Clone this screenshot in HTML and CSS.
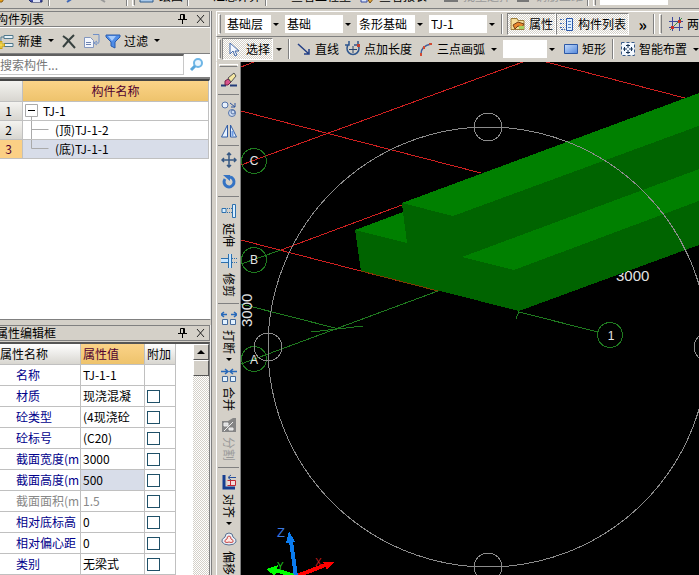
FILE: index.html
```html
<!DOCTYPE html>
<html lang="zh-CN">
<head>
<meta charset="utf-8">
<title>TJ-1</title>
<link rel="stylesheet" href="styles.css">
</head>
<body>
<header class="mainbar">
  <div class="mainbar-row">
    <svg class="ico" viewBox="0 0 16 16"><path d="M0 3h10l5 3-5 8H0z" fill="#e9a21b" stroke="#8a5a10"/></svg>
    <svg class="ico save" viewBox="0 0 16 16"><path d="M1 1h13v13H3L1 12z" fill="#4650a8" stroke="#1f2a6b"/><path d="M5 9h7v5H5z" fill="#dfe3f5"/></svg>
    <i class="sep"></i>
    <svg class="ico undo" viewBox="0 0 16 16"><path d="M3 5h6q5 1 2 5l-6 4" fill="none" stroke="#4169b8" stroke-width="2"/></svg>
    <svg class="ico redo" viewBox="0 0 16 16"><path d="M12 4H6Q2 7 5 10l6 4" fill="none" stroke="#999" stroke-width="2"/></svg>
    <i class="sep"></i><i class="grip"></i>
    <svg class="ico" viewBox="0 0 16 16"><path d="M1 2h13v12H1z" fill="#a9c9ea" stroke="#2d5b8c"/></svg>
    <button class="tool">绘图</button><i class="sep"></i>
    <button class="tool sum">汇总计算</button><i class="sep"></i>
    <button class="tool quantity">查看工程量</button>
    <svg class="ico formula" viewBox="0 0 16 16"><path d="M2 6h6v8H2z" fill="#dce6fa" stroke="#3048a0"/><path d="M11 6l4 4-4 5-3-5z" fill="#e5aa40" stroke="#7b5010"/></svg>
    <button class="tool">查看报表</button>
    <svg class="ico batch" viewBox="0 0 16 16"><path d="M1 2h14v12H1z" fill="#777"/><path d="M5 8h5v3H5z" fill="#fff"/></svg>
    <button class="tool" disabled>批量选择</button>
    <svg class="ico" viewBox="0 0 16 16"><path d="M2 2h12v12H2z" fill="#777"/></svg>
    <button class="tool" disabled>钢筋三维</button>
    <i class="sep"></i><i class="grip"></i>
    <span class="combo w78"><select aria-label="视图"><option></option></select></span>
  </div>
</header>
<main class="work">
  <aside class="side">
    <section class="dock list">
      <h2 class="dock-title"><span>构件列表</span>
        <button class="mini" aria-label="固定"><svg viewBox="0 0 9 10"><path d="M2.500.5h4v5h-4zM0 5.500h9M4.500 6v4M5.500 1v4" fill="none" stroke="#000"/></svg></button>
        <button class="mini" aria-label="关闭"><svg viewBox="0 0 9 10"><path d="M1 1l7 8M8 1L1 9" stroke="#222" fill="none"/></svg></button>
      </h2>
      <div class="dock-tools">
        <button class="tool"><svg class="ico" viewBox="0 0 16 16"><path d="M5 2.500h9v3H5zM5 10.500h9v3H5zM2 4h3M2 4v8h3" fill="#e8f2f8" stroke="#50788c"/><path d="M2 8v8M-2 12h8" stroke="#c9a010" stroke-width="3"/><path d="M2 9v6M-1 12h6" stroke="#ffe864"/></svg>新建<i class="caret"></i></button>
        <button class="tool" aria-label="删除"><svg class="ico" viewBox="0 0 16 16"><path d="M2 3l4 3 8 9M13 2L8 7l-6 7" stroke="#37413f" stroke-width="2" fill="none"/></svg></button>
        <button class="tool copy" aria-label="复制"><svg class="ico" viewBox="0 0 16 16"><path d="M.5 4.500h6l3 3v7h-9z" fill="#f3f6fd" stroke="#8296be"/><path d="M2 9.500h5M2 11.500h5" stroke="#6d83b0"/><path d="M9 1.500h6v8M12 10h3M13 8l-3 2 3 2" fill="none" stroke="#6f8fc9"/></svg></button>
        <button class="tool filter"><svg class="ico" viewBox="0 0 16 16"><path d="M1 2h14v2l-5 5v6l-4-2V9L1 4z" fill="#4f8de8" stroke="#2a5cad"/><path d="M3 3h8L7 8z" fill="#a7cbfa"/></svg>过滤<i class="caret"></i></button>
      </div>
      <div class="search">
        <input type="text" aria-label="搜索构件" placeholder="搜索构件...">
        <button class="find" aria-label="搜索"><svg class="ico" viewBox="0 0 16 16"><circle cx="9" cy="6" r="4" fill="#eaf6ff" stroke="#6fb6e6" stroke-width="2"/><path d="M6 9l-4 4" stroke="#58a6dc" stroke-width="3"/></svg></button>
      </div>
      <table class="tree">
        <thead><tr><th class="num"></th><th>构件名称</th></tr></thead>
        <tbody>
          <tr><td class="num">1</td><td><svg class="twig" viewBox="0 0 18 18"><path d="M2.500 2.500h12v12h-12zM8.500 14.500v4" fill="none" stroke="#aaa"/><path d="M5 8.500h7" stroke="#000"/></svg>TJ-1</td></tr>
          <tr><td class="num">2</td><td><svg class="twig wide" viewBox="0 0 30 18"><path d="M8.500 0v18M8.500 8.500h17" fill="none" stroke="#aaa"/></svg>(顶)TJ-1-2</td></tr>
          <tr class="sel"><td class="num">3</td><td><svg class="twig wide" viewBox="0 0 30 18"><path d="M8.500 0v8.500h17" fill="none" stroke="#aaa"/></svg>(底)TJ-1-1</td></tr>
        </tbody>
      </table>
    </section>
    <section class="dock props">
      <h2 class="dock-title"><span>属性编辑框</span>
        <button class="mini" aria-label="固定"><svg viewBox="0 0 9 10"><path d="M2.500.5h4v5h-4zM0 5.500h9M4.500 6v4M5.500 1v4" fill="none" stroke="#000"/></svg></button>
        <button class="mini" aria-label="关闭"><svg viewBox="0 0 9 10"><path d="M1 1l7 8M8 1L1 9" stroke="#222" fill="none"/></svg></button>
      </h2>
      <div class="prop-body">
        <table class="prop">
          <thead><tr><th class="c1">属性名称</th><th class="c2">属性值</th><th class="c3">附加</th></tr></thead>
          <tbody>
            <tr><td>名称</td><td>TJ-1-1</td><td></td></tr>
            <tr><td>材质</td><td>现浇混凝</td><td><input type="checkbox" aria-label="材质"></td></tr>
            <tr><td>砼类型</td><td>(4现浇砼</td><td><input type="checkbox" aria-label="砼类型"></td></tr>
            <tr><td>砼标号</td><td>(C20)</td><td><input type="checkbox" aria-label="砼标号"></td></tr>
            <tr><td>截面宽度(m</td><td>3000</td><td><input type="checkbox" aria-label="截面宽度"></td></tr>
            <tr><td>截面高度(m</td><td class="cur">500</td><td><input type="checkbox" aria-label="截面高度"></td></tr>
            <tr class="ro"><td>截面面积(m</td><td>1.5</td><td><input type="checkbox" aria-label="截面面积"></td></tr>
            <tr><td>相对底标高</td><td>0</td><td><input type="checkbox" aria-label="相对底标高"></td></tr>
            <tr><td>相对偏心距</td><td>0</td><td><input type="checkbox" aria-label="相对偏心距"></td></tr>
            <tr><td>类别</td><td>无梁式</td><td><input type="checkbox" aria-label="类别"></td></tr>
          </tbody>
        </table>
        <div class="scroll"><button class="sbtn" aria-label="向上"><i class="caret up"></i></button><div class="thumb"></div></div>
      </div>
    </section>
  </aside>
  <section class="stage">
    <div class="bar">
      <i class="grip"></i>
      <span class="combo w56"><select aria-label="楼层"><option>基础层</option></select></span>
      <span class="combo w68"><select aria-label="构件大类"><option>基础</option></select></span>
      <span class="combo w68"><select aria-label="构件类型"><option>条形基础</option></select></span>
      <span class="combo w68"><select aria-label="构件"><option>TJ-1</option></select></span>
      <i class="sep"></i>
      <button class="tool on"><svg class="ico" viewBox="0 0 16 16"><path d="M1 2.500h6l1 2h6v9H1z" fill="#f6df9a" stroke="#9c7c3a"/><path d="M3 9l5-3 6 2-2 3-4-1-3 3z" fill="#e9862d" stroke="#754018"/><path d="M9 10h5v3H9z" fill="#a8d060"/></svg>属性</button>
      <button class="tool on"><svg class="ico" viewBox="0 0 16 16"><path d="M7.500 2.500h6v12h-6z" fill="#dff0ff" stroke="#2855a8"/><path d="M9 5.500h3M9 8.500h3M9 11.500h3" stroke="#5a82c0"/><path d="M1 3.500h4M1 7.500h4M1 11.500h4M2 13.500h4" stroke="#3f69b1" stroke-dasharray="2 1"/></svg>构件列表</button>
      <button class="more" aria-label="更多">»</button>
      <i class="sep"></i><i class="grip"></i>
      <button class="tool"><svg class="ico" viewBox="0 0 16 16"><path d="M1 5.500h14M1 11.500h14M4.500 1v14M11.500 1v14" stroke="#3d4a9c"/><path d="M2 14L14 2" stroke="#398c45"/><path d="M3 10h3v3H3zM10 4h3v3h-3z" fill="#c53028"/></svg>两</button>
    </div>
    <div class="bar draw">
      <i class="grip"></i>
      <button class="tool on pick"><svg class="ico" viewBox="0 0 16 16"><path d="M3 2v11l3-3 2 5 2-1-2-4h4z" fill="#f4f8ff" stroke="#456aa8"/></svg>选择</button><button class="drop" aria-label="选择方式"><i class="caret"></i></button>
      <i class="sep"></i>
      <button class="tool"><svg class="ico" viewBox="0 0 16 16"><path d="M2 3l11 10M13 8v5H8" stroke="#233f86" stroke-width="1.500" fill="none"/></svg>直线</button>
      <button class="tool"><svg class="ico" viewBox="0 0 16 16"><path d="M4 3a6 6 0 1 0 8 0M4 0v4H0M9 4h4V0" stroke="#2e568f" stroke-width="1.500" fill="none"/><path d="M8 5v7M4 8.500h8" stroke="#29456f"/><path d="M12 3h3v3h-3z" fill="#c34333"/></svg>点加长度</button>
      <button class="tool arc"><svg class="ico" viewBox="0 0 16 16"><path d="M3 13Q3 5 13 3" stroke="#3d5d9b" stroke-width="1.500" fill="none"/><path d="M2 12h2v3H2zM5 5h2v3H5zM11 2h3v2h-3z" fill="#d24a32"/></svg>三点画弧<i class="caret"></i></button>
      <span class="combo w54"><select aria-label="画弧半径"><option></option></select></span>
      <button class="tool"><svg class="ico" viewBox="0 0 16 16"><defs><linearGradient id="rg" x2="1" y2="1"><stop stop-color="#c6dcfb"/><stop offset="1" stop-color="#5287db"/></linearGradient></defs><path d="M1.500 3.500h13v9h-13z" fill="url(#rg)" stroke="#2c58a6"/></svg>矩形</button>
      <i class="sep"></i>
      <button class="tool"><svg class="ico" viewBox="0 0 16 16"><path d="M1.500 1.500h13v13h-13z" fill="#f2f8ff" stroke="#375a89" stroke-dasharray="3 2"/><path d="M8 3v4M8 9v4M3 8h4M9 8h4M6 4.500h4M6 11.500h4M4.500 6v4M11.500 6v4" stroke="#183456"/></svg>智能布置<i class="caret"></i></button>
    </div>
    <div class="lower">
      <nav class="vbar">
        <i class="hgrip"></i>
        <button class="vtool" aria-label="删除"><svg class="ico" viewBox="0 0 16 16"><path d="M0 13.500h5M9 13.500h7" stroke="#233c7b" stroke-width="2"/><path d="M4 9l3-2 3 3-3 3H4z" fill="#d7528b" stroke="#702044"/><path d="M7 6l6-5 2 3-5 6z" fill="#f4e6a0" stroke="#555"/></svg></button>
        <i class="hsep"></i>
        <button class="vtool" aria-label="复制"><svg class="ico" viewBox="0 0 16 16"><circle cx="4" cy="4" r="3" fill="#e8f0fb" stroke="#5573a7"/><circle cx="11" cy="12" r="3.500" fill="#cddcf2" stroke="#5573a7"/><circle cx="12" cy="11" r="2" fill="none" stroke="#5573a7"/><path d="M9 2l5 4M14 2v4h-4" stroke="#2e549c" fill="none"/></svg></button>
        <button class="vtool" aria-label="镜像"><svg class="ico" viewBox="0 0 16 16"><path d="M6.500 2v12H.5zM9.500 2v12h6z" fill="#e8f3ff" stroke="#315ca5"/><path d="M11.500 8v5" stroke="#6c9ae0" stroke-width="2"/></svg></button>
        <i class="hsep"></i>
        <button class="vtool" aria-label="移动"><svg class="ico" viewBox="0 0 16 16"><path d="M8 1v14M1 8h14M6 3l2-2 2 2M6 13l2 2 2-2M3 6L1 8l2 2M13 6l2 2-2 2" stroke="#365883" stroke-width="1.500" fill="none"/></svg></button>
        <button class="vtool" aria-label="旋转"><svg class="ico" viewBox="0 0 16 16"><path d="M4 5a5 5 0 1 0 5-2" stroke="#3473c4" stroke-width="3" fill="none"/><path d="M2 1h7v6z" fill="#3473c4"/></svg></button>
        <i class="hsep"></i>
        <button class="vtool"><svg class="ico" viewBox="0 0 16 16"><path d="M11.500 1.500h3v13h-3z" fill="#d9efff" stroke="#2d70ad"/><path d="M1 5.500h4v4H1z" fill="#d9efff" stroke="#2d70ad"/><path d="M6 5.500h5M6 9.500h5" stroke="#2d70ad" stroke-dasharray="1 1"/></svg><span>延伸</span></button>
        <button class="vtool"><svg class="ico" viewBox="0 0 16 16"><path d="M7.500 1v14M10.500 1v14M0 5.500h7M0 9.500h7" stroke="#2d70ad"/><path d="M8 1h2v14H8zM0 6h7v3H0z" fill="#c7e5ff"/><path d="M11 5.500h5M11 9.500h5" stroke="#2d70ad" stroke-dasharray="1 1"/></svg><span>修剪</span></button>
        <i class="hsep"></i>
        <button class="vtool"><svg class="ico" viewBox="0 0 16 16"><path d="M1.500 9.500h5v5h-5zM9.500 9.500h5v5h-5z" fill="#e2f2ff" stroke="#456a9a"/><path d="M0 4.500h6M3 2L0 4.500 3 7M10 4.500h6M13 2l3 2.500L13 7" stroke="#2668ba" stroke-width="1.500" fill="none"/></svg><span>打断</span><i class="caret side"></i></button>
        <button class="vtool"><svg class="ico" viewBox="0 0 16 16"><path d="M1.500 9.500h5v5h-5zM9.500 9.500h5v5h-5z" fill="#e2f2ff" stroke="#456a9a"/><path d="M0 4.500h6M4 2l3 2.500L4 7M10 4.500h6M12 2L9 4.500 12 7" stroke="#2668ba" stroke-width="1.500" fill="none"/></svg><span>合并</span></button>
        <button class="vtool" disabled><svg class="ico" viewBox="0 0 16 16"><path d="M1 4h6l5-3h3v14H1z" fill="#858585"/><path d="M3 6h4v3H3zM3 14l9-9M8 11h4v2H8z" fill="#ddd" stroke="#eee"/></svg><span>分割</span></button>
        <i class="hsep"></i>
        <button class="vtool"><svg class="ico" viewBox="0 0 16 16"><path d="M3 1v13h11" stroke="#173e91" stroke-width="3" fill="none"/><path d="M6.500 6.500h8v5h-8M9.500 6v5" fill="#f4dada" stroke="#c32a35"/><path d="M8 3.500h7M10 1L7 3.500 10 6" stroke="#274f9b" fill="none"/></svg><span>对齐</span><i class="caret side"></i></button>
        <button class="vtool"><svg class="ico" viewBox="0 0 16 16"><path d="M8 2q4 0 4 4 4 2 3 5-2 3-7 3-5 0-7-3-1-3 3-5 0-4 4-4z" fill="#e9eef7" stroke="#5b7090"/><path d="M8 5q2 0 2 3 3 1 2 3-2 1-4 0-2 1-4 0-1-2 2-3 0-3 2-3z" fill="#ffe8e4" stroke="#c84b48"/></svg><span>偏移</span></button>
      </nav>
      <div class="viewport">
        <svg class="scene" role="img" aria-label="三维视图">
          <g transform="translate(-241 -62)">
            <g class="axis-red"><path d="M241 67l13-5M241 165L523 62M241 111l240 62M546 62l139 36M402 205l-121 45M241 240l197 51"/></g>
            <g class="axis-green"><path d="M281 250l-40 14M438 291L241 364M241 304l94 24M311 332l52-6M519 311l-3 8M519 312l79 20"/><circle cx="254" cy="161" r="12.500"/><circle cx="254" cy="260" r="12.500"/><circle cx="254" cy="359" r="12.500"/><circle cx="610" cy="335" r="12.500"/></g>
            <g class="label"><text x="616" y="281">3000</text><text transform="translate(252 327) rotate(-90)">3000</text></g>
            <path d="M402 203L996-17v153L519 311 361 271l-6-41 48-18z" fill="#006400"/>
            <path d="M402 203L996-17V17L453 216zM355 230l48-18 4 31zM462 257L996 59v31L514 270z" fill="#008000"/>
            <path d="M361 271l77 20" stroke="#7b3b00"/>
            <g class="label small"><text x="254" y="165">C</text><text x="254" y="264">B</text><text x="254" y="364">A</text><text x="611" y="340">1</text></g>
            <g class="orbit"><circle cx="488" cy="347" r="220"/><circle cx="488" cy="127" r="14"/><circle cx="268" cy="347" r="14"/><circle cx="708" cy="347" r="14"/><circle cx="488" cy="567" r="14"/></g>
            <path d="M297 576l31-12" stroke="#f00" stroke-width="4"/><path d="M334 562l-11 0 4 8z" fill="#f00"/>
            <path d="M295 576l-20-6" stroke="#0f0" stroke-width="4"/><path d="M266 569l12-4-3 11z" fill="#0f0"/>
            <path d="M296 577l-5-36" stroke="#0a7cf0" stroke-width="4"/><path d="M289 531l6 11-9 1z" fill="#0a7cf0"/>
            <g class="triad"><text x="277" y="537" fill="#3a78e0">Z</text><text class="xs" x="315" y="566" fill="#c81e1e">X</text><text class="xs" x="277" y="570" fill="#20c020">Y</text></g>
          </g>
        </svg>
      </div>
    </div>
  </section>
</main>
</body>
</html>
```
FILE: styles.css
```css
* { box-sizing: border-box; }
html, body { height: 100%; }
body {
  margin: 0;
  display: flex;
  flex-direction: column;
  overflow: hidden;
  background: #d4d0c8;
  color: #000;
  font: 12px/16px "Noto Sans CJK SC", sans-serif;
}
button, select, input { font: inherit; color: inherit; margin: 0; }
button { border: 0; padding: 0; background: none; white-space: nowrap; }
.ico { width: 16px; height: 16px; flex: none; display: block; }

.mainbar {
  flex: none;
  height: 9px;
  overflow: hidden;
  display: flex;
  align-items: flex-end;
  border-bottom: 1px solid #808080;
}
.mainbar-row { display: flex; align-items: center; flex: none; gap: 4px; height: 22px; padding-bottom: 2px; margin-left: -8px; }
.mainbar .tool:disabled { color: #999; }
.save { margin-left: 16px; }
.undo { margin-left: 8px; }
.redo { margin-left: 12px; margin-right: 12px; }
.sum { margin-left: 20px; }
.quantity { margin-left: 20px; }
.formula { margin-left: 4px; }
.batch { margin-left: 12px; }

.work { flex: 1; display: flex; min-height: 0; gap: 4px; padding-top: 2px; }
.side { flex: none; width: 212px; display: flex; flex-direction: column; border-right: 1px solid #808080; }
.dock { border-right: 1px solid #eee; display: flex; flex-direction: column; }
.list { flex: none; height: 309px; border-bottom: 1px solid #808080; }
.props { flex: 1; min-height: 0; margin-top: 5px; }
.dock-title {
  flex: none;
  margin: 0;
  height: 16px;
  display: flex;
  align-items: center;
  gap: 9px;
  padding-right: 4px;
  font-size: 12px;
  font-weight: 400;
  border: 1px solid #808080;
  border-left: 0;
  overflow: hidden;
}
.dock-title span { flex: 1; margin-left: -4px; line-height: 14px; }
.mini { width: 9px; height: 10px; }
.mini svg { display: block; width: 9px; height: 10px; }

.dock-tools { flex: none; height: 26px; display: flex; align-items: center; gap: 8px; border-top: 1px solid #fff; }
.tool { display: flex; align-items: center; gap: 3px; height: 22px; flex: none; }
.filter { margin-left: -2px; }
.caret { width: 0; height: 0; border: 3px solid transparent; border-top-color: #000; border-bottom: 0; margin-left: 3px; }
.caret.up { border: 4px solid transparent; border-bottom-color: #000; border-top: 0; margin: 0; }
.caret.side { margin: 0; }
.dock-tools .ico { margin-left: -1px; }

.search { flex: none; height: 26px; display: flex; background: #fff; border-bottom: 2px solid #808080; border-top: 1px solid #808080; padding-bottom: 2px; }
.search input { flex: 1; min-width: 0; border: 1px solid #c8c8c8; border-top: 2px solid #606060; border-left: 0; padding: 0; background: #fff; outline: 0; }
.search input::placeholder { color: #777; opacity: 1; }
.find { width: 26px; display: flex; align-items: center; justify-content: center; }

table { border-collapse: separate; border-spacing: 0; table-layout: fixed; }
th { font-weight: 400; }
th, td { padding: 0; white-space: nowrap; overflow: hidden; border-right: 1px solid #c0c0c0; border-bottom: 1px solid #c0c0c0; }
.list { background: linear-gradient(#d4d0c8 68px, #fff 68px); }
.tree { width: 100%; border-top: 2px solid #444; border-right: 1px solid #fff; }
.tree th { height: 21px; background: linear-gradient(#fbd388, #eec36c); color: #500030; }
.tree td { height: 19px; line-height: 18px; }
.tree .num { width: 23px; text-align: center; background: linear-gradient(#f4f3f0, #d8d6d0); padding-right: 5px; }
.tree .sel td { background: #d8dde9; }
.tree .sel .num { background: #fbd085; color: #500030; }
.twig { width: 18px; height: 18px; vertical-align: top; margin-right: 2px; }
.twig.wide { width: 30px; }

.prop-body { flex: 1; min-height: 0; overflow: hidden; margin-top: 1px; display: flex; justify-content: space-between; background: #fff; border-top: 2px solid #555; border-right: 1px solid #808080; }
.prop { flex: none; align-self: flex-start; width: 176px; }
.prop th { height: 21px; text-align: left; background: linear-gradient(#fff, #d8d6d0); }
.prop td { height: 21px; line-height: 20px; }
.prop .c1 { width: 81px; }
.prop .c2 { width: 64px; padding-left: 2px; background: linear-gradient(#fbd388, #eec36c); color: #500030; }
.prop .c3 { width: 31px; padding-left: 2px; }
.prop td:first-child { padding-left: 16px; color: #00008b; }
.prop td:nth-child(2) { padding-left: 2px; }
.prop .ro td, .prop .ro td:first-child { color: #888; }
.prop .cur { background: #d8dde9; }
.prop input { appearance: none; display: block; width: 13px; height: 13px; margin-left: 2px; border: 1px solid #1f5068; background: #fff; }
.scroll { width: 16px; background: repeating-conic-gradient(#d4d0c8 0 25%, #fff 0 50%) 0 0 / 2px 2px; }
.sbtn, .thumb { display: flex; align-items: center; justify-content: center; width: 16px; height: 16px; background: #d4d0c8; border: 1px solid #fff; border-right-color: #555; border-bottom-color: #555; }

.stage { flex: 1; min-width: 0; display: flex; flex-direction: column; }
.bar { flex: none; height: 26px; display: flex; align-items: center; gap: 4px; overflow: hidden; border: 1px solid #fff; border-right: 0; border-bottom-color: #808080; padding-left: 1px; }
.bar.draw { height: 25px; gap: 6px; border-top: 0; border-bottom-color: #d4d0c8; }
.sep { flex: none; width: 2px; height: 20px; border-left: 1px solid #808080; border-right: 1px solid #fff; }
.grip { flex: none; width: 3px; height: 20px; border: 1px solid #fff; border-right-color: #808080; }
.combo { position: relative; flex: none; height: 18px; display: block; }
.combo select { appearance: none; width: 100%; height: 18px; border: 0; border-right: 10px solid #d4d0c8; border-radius: 0; padding: 0 0 0 2px; background: #fff; line-height: 18px; outline: 0; display: block; }
.combo::after { content: ""; position: absolute; right: 2px; top: 8px; border: 3px solid transparent; border-top-color: #000; border-bottom: 0; pointer-events: none; }
.w54 { width: 54px; }
.w56 { width: 56px; }
.w68 { width: 68px; }
.w78 { width: 78px; }
.on { background: repeating-conic-gradient(#d4d0c8 0 25%, #fff 0 50%) 0 0 / 2px 2px; border: 1px solid #808080; border-right-color: #fff; border-bottom-color: #fff; padding: 0 2px; }
.bar .on + .on { margin-left: -4px; }
.more { margin-left: auto; margin-right: 2px; font-size: 16px; font-weight: 700; line-height: 16px; height: 24px; }
.bar .grip + .tool { margin-left: 2px; }
.bar.draw .grip + .tool { margin-left: -5px; padding-left: 4px; }
.draw .drop { margin-left: -6px; }

.lower { flex: 1; min-height: 0; display: flex; }
.vbar { flex: none; width: 25px; overflow: hidden; display: flex; flex-direction: column; align-items: stretch; border-left: 1px solid #fff; border-right: 1px solid #808080; }
.hgrip { flex: none; height: 3px; margin: 2px; border: 1px solid #fff; border-bottom-color: #808080; }
.hsep { flex: none; height: 1px; margin: 3px 1px; background: #808080; }
.vtool { flex: none; display: flex; flex-direction: column; align-items: center; gap: 4px; padding: 3px 0; }
.vtool span { writing-mode: vertical-rl; text-orientation: sideways; line-height: 16px; height: 24px; }
.vtool:disabled { color: #999; }
.drop { display: flex; align-items: center; height: 22px; }
.viewport { flex: 1; min-width: 0; background: #000; }
.scene { display: block; width: 100%; height: 100%; shape-rendering: crispEdges; }
.axis-red { stroke: #d02020; fill: none; }
.axis-green { stroke: #1f7a1f; fill: none; }
.orbit { stroke: #8c8c8c; fill: none; }
.label { fill: #e4e4e4; font: 15px "Liberation Sans", sans-serif; }
.small { font-size: 12px; text-anchor: middle; }
.triad { font: 13px "Liberation Sans", sans-serif; }
.xs { font-size: 10px; }
```
